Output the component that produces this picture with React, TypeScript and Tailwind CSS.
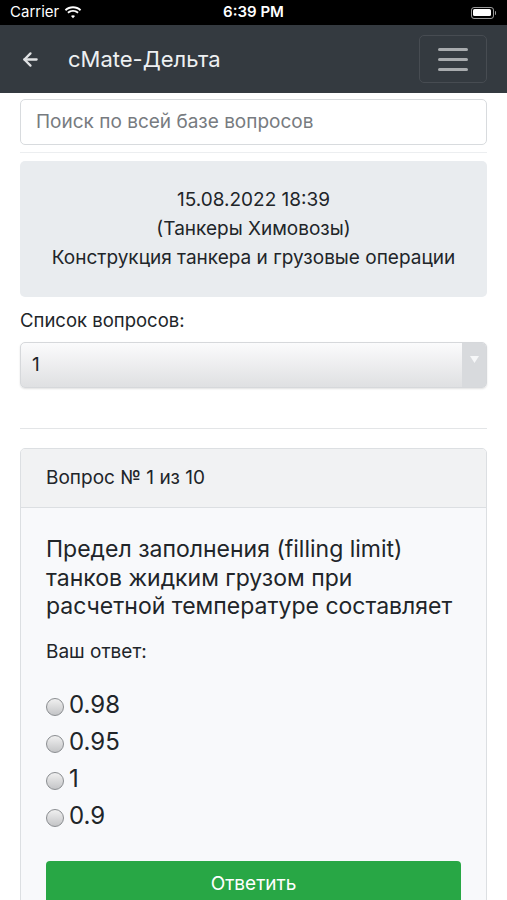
import { ArrowLeft } from "lucide-react";

const font = { fontFamily: 'Inter, "Liberation Sans", Arial, sans-serif' };

const answers = ["0.98", "0.95", "1", "0.9"];

const StatusBar = () => (
  <div className="flex h-[25px] items-center justify-between bg-black px-[10px] text-[15px] text-white">
    <div className="flex w-[120px] items-center gap-[5px]">
      <span>Carrier</span>
      <svg width="18" height="13" viewBox="0 0 18 13" fill="white">
        <path d="M9 2.2c2.7 0 5.1 1 6.9 2.7l1.3-1.4C15 1.5 12.1.3 9 .3S3 1.5.8 3.5l1.3 1.4C3.9 3.2 6.3 2.2 9 2.2z" />
        <path d="M9 5.8c1.7 0 3.2.6 4.4 1.7l1.3-1.4C13.2 4.7 11.2 3.9 9 3.9s-4.2.8-5.7 2.2l1.3 1.4C5.8 6.4 7.3 5.8 9 5.8z" />
        <path d="M9 9.3c.8 0 1.5.3 2 .8L9 12.3 7 10.1c.5-.5 1.2-.8 2-.8z" />
      </svg>
    </div>
    <span className="font-semibold">6:39 PM</span>
    <div className="flex w-[120px] items-center justify-end pr-[1px]">
      <div className="flex h-[12px] w-[23px] items-center rounded-[3px] border border-white/60 p-[1.5px]">
        <div className="h-full w-full rounded-[1.5px] bg-white" />
      </div>
      <div className="ml-[1px] h-[4px] w-[1.5px] rounded-r bg-white/60" />
    </div>
  </div>
);

const NavBar = () => (
  <div className="flex h-[68px] items-center bg-[#343a40] pl-[20px] pr-[20px]">
    <ArrowLeft className="h-[21px] w-[21px] text-[#e0e2e4]" strokeWidth={2.6} />
    <span className="ml-[27px] text-[22px] text-[#eef0f2]">cMate-Дельта</span>
    <button className="ml-auto flex h-[48px] w-[68px] flex-col items-center justify-center gap-[7px] rounded-[5px] border border-[#474c52]">
      <span className="h-[3px] w-[30px] rounded bg-[#a8abae]" />
      <span className="h-[3px] w-[30px] rounded bg-[#a8abae]" />
      <span className="h-[3px] w-[30px] rounded bg-[#a8abae]" />
    </button>
  </div>
);

export default function App() {
  return (
    <div className="h-[900px] overflow-hidden bg-white text-[#212529]" style={font}>
      <StatusBar />
      <NavBar />

      <div className="px-[20px]">
        <div className="mt-[6px] flex h-[46px] items-center rounded-[5px] border border-[#d8dbde] px-[15px] text-[19px] text-[#777b80]">
          Поиск по всей базе вопросов
        </div>
        <div className="mt-[7px] h-px bg-[#eceef0]" />

        <div className="mt-[8px] flex h-[136px] flex-col items-center justify-center gap-[5px] rounded-[5px] bg-[#e9ecef] text-[19px] leading-[24px]">
          <span>15.08.2022 18:39</span>
          <span>(Танкеры Химовозы)</span>
          <span>Конструкция танкера и грузовые операции</span>
        </div>

        <div className="mt-[11px] text-[18.5px] leading-[24px]">Список вопросов:</div>

        <div className="mt-[10px] flex h-[46px] items-stretch overflow-hidden rounded-[5px] border border-[#d6d8db] bg-gradient-to-b from-[#fbfbfc] to-[#dfe0e2] shadow-[0_1px_2px_rgba(0,0,0,0.12)]">
          <span className="flex flex-1 items-center pl-[11px] text-[19px]">1</span>
          <span className="flex w-[24px] items-start justify-center bg-[#d8dadd] pt-[13px]">
            <svg width="9" height="7" viewBox="0 0 9 7">
              <path d="M0 0h9L4.5 7z" fill="#f6f7f8" />
            </svg>
          </span>
        </div>

        <div className="mt-[40px] h-px bg-[#e3e5e7]" />

        <div className="mt-[19px] overflow-hidden rounded-t-[5px] border border-[#dcdfe2] bg-[#f8f9fb]">
          <div className="flex h-[59px] items-center border-b border-[#dcdfe2] bg-[#f1f2f3] px-[25px] text-[19px]">
            Вопрос № 1 из 10
          </div>
          <div className="px-[25px] pt-[27px] pb-[40px]">
            <div className="text-[23px] leading-[28.5px]">
              Предел заполнения (filling limit) танков жидким грузом при расчетной температуре составляет
            </div>
            <div className="mt-[19px] text-[19px] leading-[24px]">Ваш ответ:</div>
            <div className="mt-[26px] flex flex-col gap-[7px]">
              {answers.map((a) => (
                <label key={a} className="flex h-[30px] items-center text-[24px]">
                  <span className="mt-[4px] h-[18px] w-[18px] rounded-full border border-[#8a8d90] bg-gradient-to-b from-[#f0f0f0] to-[#c4c5c7]" />
                  <span className="ml-[5px]">{a}</span>
                </label>
              ))}
            </div>
            <button className="mt-[30px] flex h-[48px] w-full items-center justify-center rounded-[4px] bg-[#28a745] text-[19px] text-white">
              Ответить
            </button>
          </div>
        </div>
      </div>
    </div>
  );
}
